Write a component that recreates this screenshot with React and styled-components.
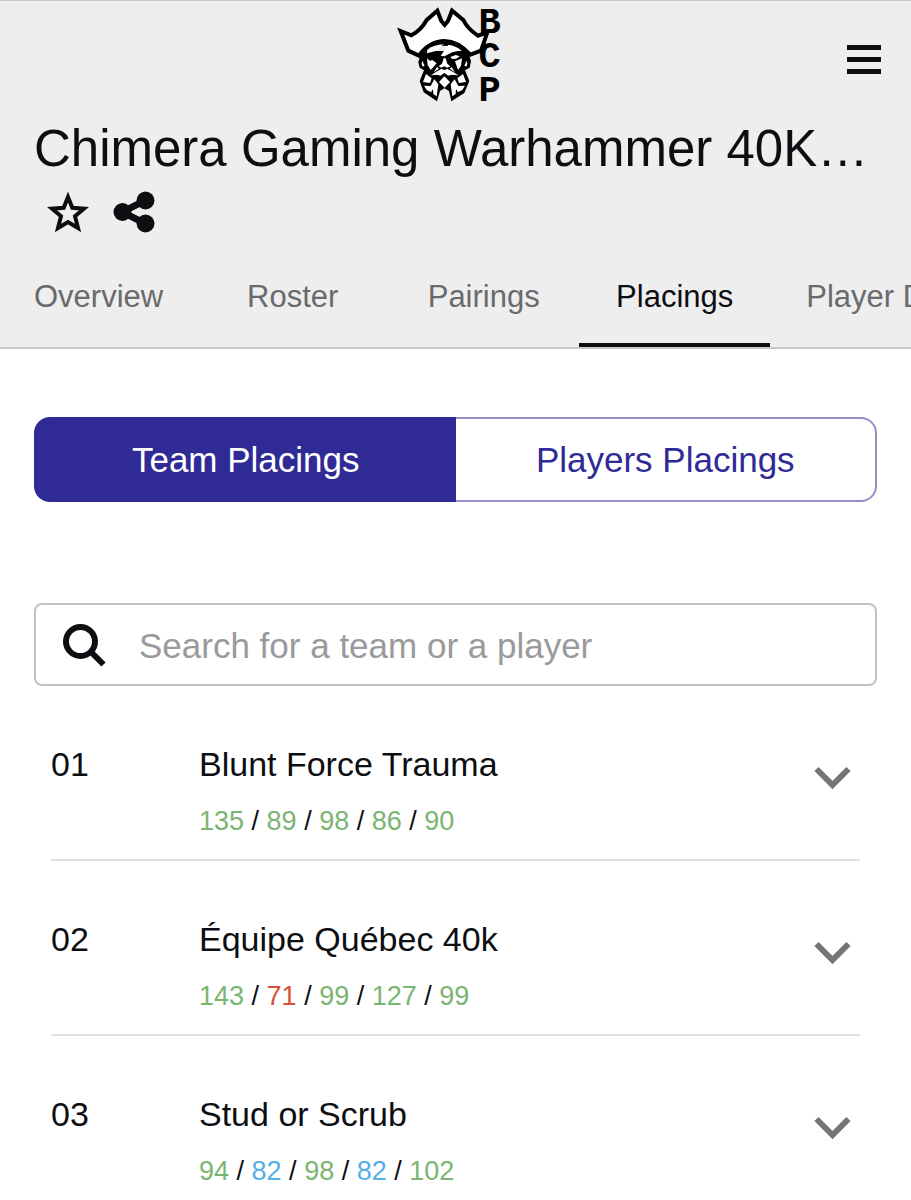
import React, { useState } from "react";
import styled, { createGlobalStyle } from "styled-components";

const GlobalStyle = createGlobalStyle`
  * { box-sizing: border-box; }
  body {
    margin: 0;
    background: #fff;
    color: #0d0e12;
    font-family: "Liberation Sans", Arial, Helvetica, sans-serif;
  }
  button, input { font: inherit; color: inherit; }
`;

const Page = styled.div`
  min-height: 100vh;
  overflow: hidden;
`;

const Header = styled.header`
  background: #eee;
  border-top: 1px solid #c9c9c9;
  border-bottom: 2px solid #c9c9c9;
`;

const TopBar = styled.div`
  display: grid;
  grid-template-columns: 1fr auto 1fr;
  align-items: start;
  height: 118px;
  padding: 0 24px 0 14px;
`;

const LogoLink = styled.a`
  grid-column: 2;
  display: block;
  color: #000;
  svg { display: block; overflow: visible; }
`;

const IconButton = styled.button`
  display: flex;
  align-items: center;
  justify-content: center;
  width: ${(p) => p.$width}px;
  height: ${(p) => p.$height}px;
  padding: 0;
  border: 0;
  background: none;
  color: ${(p) => p.$color || "#0d0e12"};
  cursor: pointer;
  svg { display: block; }
`;

const MenuSlot = styled.div`
  display: flex;
  justify-content: flex-end;
  padding-top: 34px;
`;

const Title = styled.h1`
  margin: 0;
  padding: 0 34px;
  font-size: 51px;
  line-height: 60px;
  font-weight: 400;
  white-space: nowrap;
  overflow: hidden;
  text-overflow: ellipsis;
`;

const Actions = styled.div`
  display: flex;
  gap: 16px;
  padding: 8px 43px 10px;
`;

const Tabs = styled.nav`
  display: flex;
  overflow: hidden;
`;

const Tab = styled.a`
  flex: none;
  display: flex;
  align-items: center;
  justify-content: center;
  min-width: 191px;
  height: 100px;
  padding: 4px 34px 0;
  border-bottom: 4px solid ${(p) => (p.$active ? "#0d0e12" : "transparent")};
  color: ${(p) => (p.$active ? "#0d0e12" : "#6a6a6c")};
  font-size: 31px;
  line-height: 36px;
  white-space: nowrap;
  text-decoration: none;
`;

const Main = styled.main`
  padding: 68px 34px 0;
`;

const Toggle = styled.div`
  display: grid;
  grid-template-columns: 1fr 1fr;
  height: 85px;
`;

const ToggleButton = styled.button`
  padding: 0;
  border: 2px solid ${(p) => (p.$active ? "#2f2a96" : "#928fc6")};
  background: ${(p) => (p.$active ? "#2f2a96" : "#fff")};
  color: ${(p) => (p.$active ? "#fff" : "#2f2a96")};
  font-size: 35px;
  line-height: 36px;
  cursor: pointer;
  &:first-child {
    border-right: 0;
    border-radius: 16px 0 0 16px;
  }
  &:last-child {
    border-left: 0;
    border-radius: 0 16px 16px 0;
  }
`;

const SearchBox = styled.label`
  display: flex;
  align-items: center;
  gap: 24px;
  height: 83px;
  margin-top: 101px;
  padding: 2px 20px 0 19px;
  border: 2px solid #c2c2c2;
  border-radius: 8px;
  svg { flex: none; display: block; }
`;

const SearchInput = styled.input`
  flex: 1;
  min-width: 0;
  height: 60px;
  padding: 0;
  border: 0;
  outline: 0;
  background: none;
  font-size: 35px;
  &::placeholder { color: #9a9a9c; opacity: 1; }
`;

const TeamList = styled.ol`
  list-style: none;
  margin: 0;
  padding: 0 17px;
`;

const TeamRow = styled.li`
  display: grid;
  grid-template-columns: 148px 1fr auto;
  align-items: start;
  padding: 60px 0 22px;
  border-bottom: 2px solid #e0e0e0;
  &:last-child {
    padding-bottom: 0;
    border-bottom: 0;
  }
`;

const Rank = styled.span`
  font-size: 34px;
  line-height: 36px;
`;

const TeamName = styled.h2`
  margin: 0 0 23px;
  font-size: 34px;
  line-height: 36px;
  font-weight: 400;
`;

const Scores = styled.p`
  margin: 0;
  font-size: 27px;
  line-height: 32px;
`;

const scoreColors = { win: "#7ab572", loss: "#d9513b", draw: "#56aee8" };

const Score = styled.span`
  color: ${(p) => scoreColors[p.$result]};
`;

const LogoLetter = styled.text`
  font-family: "Liberation Mono", monospace;
  font-size: 111px;
  font-weight: 700;
  text-anchor: middle;
  fill: currentColor;
`;

const Logo = () => (
  <svg width="120" height="110" viewBox="0 0 360 330" role="img" aria-label="BCP">
    <path d="M92 150 L82 184 L86 200 L99 208 L86 240 L98 274 L138 301 L147 270 L160 262 L174 270 L181 301 L220 276 L235 240 L222 208 L236 200 L240 180 L230 150Z" fill="currentColor" />
    <path d="M29 90 L61 103 Q90 88 107 57 L139 29 L151 60 L161 72 L171 60 L183 29 L217 57 Q229 83 261 104 L289 94 L270 149 L238 161 Q203 122 160 122 Q112 122 84 164 L52 149Z" fill="#fff" stroke="currentColor" strokeWidth="12" />
    <path d="M84 158 Q116 114 160 114 Q206 115 238 156 L218 152 Q160 116 102 152Z" fill="currentColor" />
    <path d="M109 146 Q130 131 158 130 L134 150 L108 157Z" fill="#fff" />
    <path d="M172 131 Q195 134 210 148 L184 154 L160 166 L149 164Z" fill="#fff" />
    <path d="M108 172 L117 180 L124 177 L137 187 L119 207 L110 192Z" fill="#fff" />
    <path d="M158 172 L164 172 L169 188 L178 196 L168 200 L160 196 L151 200 L143 196 L153 188Z" fill="#fff" />
    <path d="M178 168 L194 162 L206 166 L196 173 L184 174Z" fill="#fff" />
    <path d="M192 181 L213 172 L210 194 L201 207Z" fill="#fff" />
    <path d="M138 198 L144 203 L128 214Z M182 198 L192 214 L176 203Z" fill="#fff" />
    <path d="M96 179 Q88 187 96 197 L101 193 L97 187Z M225 179 Q233 187 225 197 L220 193 L224 187Z" fill="#fff" />
    <path d="M120 223 L136 212 L152 203 L160 209 L168 203 L185 212 L202 223 L181 221 L160 209 L140 221Z" fill="#fff" />
    <path d="M136 220 L152 206 L168 206 L186 220 L172 224 L160 216 L148 224Z" fill="#fff" />
    <path d="M160 226 L177 243 L161 260 L144 243Z" fill="#fff" />
    <path d="M105 219 L122 232 L117 246 L96 243Z M216 219 L199 232 L204 246 L225 243Z" fill="#fff" />
    <path d="M99 254 L119 255 L130 235 L142 250 L137 286 L127 279 L126 264 L120 274 L107 267Z" fill="#fff" />
    <path d="M222 254 L202 255 L191 235 L179 250 L184 286 L194 279 L195 264 L201 274 L214 267Z" fill="#fff" />
    <LogoLetter x="296" y="95">B</LogoLetter>
    <LogoLetter x="296" y="198">C</LogoLetter>
    <LogoLetter x="296" y="300">P</LogoLetter>
  </svg>
);

const MenuIcon = () => (
  <svg width="34" height="30" viewBox="0 0 34 30" fill="currentColor" aria-hidden="true">
    <rect width="34" height="5" y="1" />
    <rect width="34" height="5" y="13" />
    <rect width="34" height="5" y="25" />
  </svg>
);

const StarIcon = () => (
  <svg width="42" height="42" viewBox="0 0 42 42" fill="none" stroke="currentColor" strokeWidth="4" aria-hidden="true">
    <path d="M21 6 L25.3 16.8 L37 17.7 L28 25.3 L31 37 L21 31 L11 37 L14 25.3 L5 17.7 L16.7 16.8Z" />
  </svg>
);

const ShareIcon = () => (
  <svg width="42" height="42" viewBox="0 0 42 42" fill="currentColor" aria-hidden="true">
    <path d="M32 9.5 L9.5 21 L32 32.5" fill="none" stroke="currentColor" strokeWidth="7" />
    <circle cx="9.5" cy="21" r="9" />
    <circle cx="32.5" cy="9.5" r="9" />
    <circle cx="32.5" cy="32.5" r="9" />
  </svg>
);

const SearchIcon = () => (
  <svg width="60" height="60" viewBox="0 0 60 60" fill="none" stroke="currentColor" aria-hidden="true">
    <circle cx="25.5" cy="25.5" r="14.5" strokeWidth="6" />
    <path d="M35 35 L48.5 48.5" strokeWidth="6" />
  </svg>
);

const ChevronIcon = () => (
  <svg width="37" height="24" viewBox="0 0 37 24" fill="none" stroke="currentColor" strokeWidth="6" aria-hidden="true">
    <path d="M2.5 3 L18.5 19 L34.5 3" />
  </svg>
);

const tabs = ["Overview", "Roster", "Pairings", "Placings", "Player D"];

const teams = [
  { rank: "01", name: "Blunt Force Trauma", scores: [[135, "win"], [89, "win"], [98, "win"], [86, "win"], [90, "win"]] },
  { rank: "02", name: "Équipe Québec 40k", scores: [[143, "win"], [71, "loss"], [99, "win"], [127, "win"], [99, "win"]] },
  { rank: "03", name: "Stud or Scrub", scores: [[94, "win"], [82, "draw"], [98, "win"], [82, "draw"], [102, "win"]] },
];

export default function App() {
  const [view, setView] = useState("team");
  return (
    <Page>
      <GlobalStyle />
      <Header>
        <TopBar>
          <LogoLink href="#home"><Logo /></LogoLink>
          <MenuSlot>
            <IconButton $width={46} $height={48} aria-label="Menu"><MenuIcon /></IconButton>
          </MenuSlot>
        </TopBar>
        <Title>Chimera Gaming Warhammer 40K…</Title>
        <Actions>
          <IconButton $width={50} $height={50} aria-label="Favorite"><StarIcon /></IconButton>
          <IconButton $width={50} $height={50} aria-label="Share"><ShareIcon /></IconButton>
        </Actions>
        <Tabs>
          {tabs.map((tab) => (
            <Tab key={tab} href="#tab" $active={tab === "Placings"}>{tab}</Tab>
          ))}
        </Tabs>
      </Header>
      <Main>
        <Toggle>
          <ToggleButton $active={view === "team"} onClick={() => setView("team")}>Team Placings</ToggleButton>
          <ToggleButton $active={view === "players"} onClick={() => setView("players")}>Players Placings</ToggleButton>
        </Toggle>
        <SearchBox>
          <SearchIcon />
          <SearchInput type="text" aria-label="Search for a team or a player" placeholder="Search for a team or a player" />
        </SearchBox>
        <TeamList>
          {teams.map((team) => (
            <TeamRow key={team.rank}>
              <Rank>{team.rank}</Rank>
              <div>
                <TeamName>{team.name}</TeamName>
                <Scores>
                  {team.scores.map(([value, result], i) => (
                    <React.Fragment key={i}>
                      {i > 0 && " / "}
                      <Score $result={result}>{value}</Score>
                    </React.Fragment>
                  ))}
                </Scores>
              </div>
              <IconButton $width={55} $height={64} $color="#757575" aria-label={`Expand ${team.name}`}>
                <ChevronIcon />
              </IconButton>
            </TeamRow>
          ))}
        </TeamList>
      </Main>
    </Page>
  );
}
